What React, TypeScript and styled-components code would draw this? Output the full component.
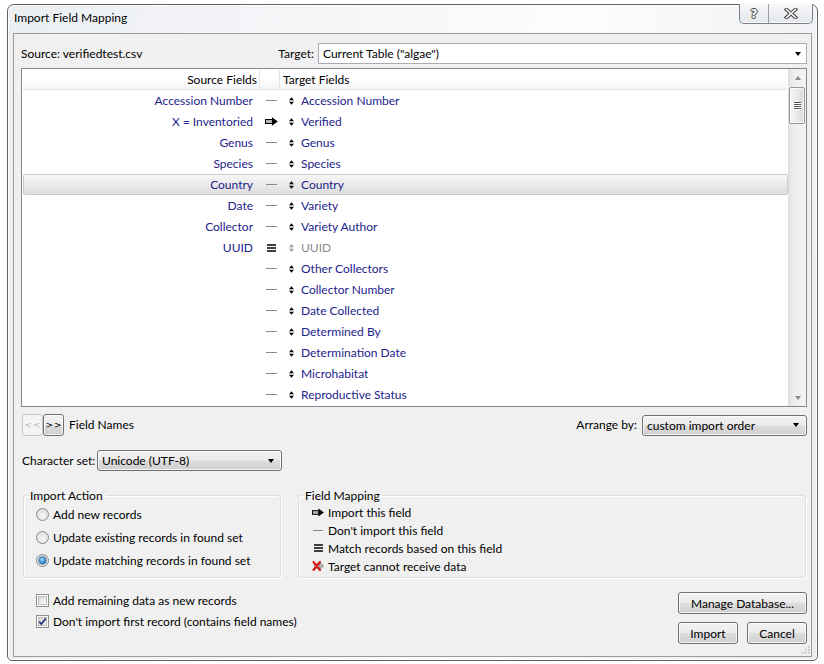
import React from "react";
import styled, { createGlobalStyle, css } from "styled-components";

const FONT = `"Lato", "Noto Sans", "Liberation Sans", sans-serif`;

const Global = createGlobalStyle`
  html, body { margin: 0; padding: 0; background: #ffffff; }
  body { font-family: ${FONT}; font-size: 12px; color: #000; }
  * { box-sizing: border-box; }
`;

const Window = styled.div`
  margin: 4px 0 0 7px;
  width: 811px;
  height: 657px;
  border: 1px solid #5f6368;
  border-radius: 7px 7px 5px 5px;
  background: linear-gradient(100deg, #eceff2 0%, #f6f7f9 40%, #fdfdfe 62%, #e9ecef 100%);
  box-shadow: inset 0 0 0 1px rgba(255, 255, 255, 0.85);
  padding: 0 5px 3px 5px;
  display: flex;
  flex-direction: column;
`;

const TitleBar = styled.div`
  height: 28px;
  display: flex;
  align-items: flex-start;
  padding-left: 1px;
`;

const TitleText = styled.div`
  flex: 1;
  margin-top: 5px;
  line-height: 16px;
  font-size: 12px;
`;

const CaptionGroup = styled.div`
  display: flex;
  margin-top: -1px;
  margin-right: -1px;
  height: 20px;
  border: 1px solid #7b7f85;
  border-top: none;
  border-radius: 0 0 5px 5px;
  overflow: hidden;
  background: linear-gradient(#f7f8fa, #e4e7ea);
  box-shadow: inset 0 -1px 0 rgba(255, 255, 255, 0.9);
`;

const CaptionButton = styled.div<{ $w: number; $sep?: boolean }>`
  width: ${(p) => p.$w}px;
  display: flex;
  align-items: center;
  justify-content: center;
  ${(p) =>
    p.$sep &&
    css`
      border-left: 1px solid #9a9ea4;
    `}
`;

const HelpGlyph = styled.span`
  font-family: "DejaVu Sans", sans-serif;
  font-size: 12px;
  font-weight: bold;
  color: #ffffff;
  line-height: 12px;
  text-shadow: 1px 0 #3c3c3c, -1px 0 #3c3c3c, 0 1px #3c3c3c, 0 -1px #3c3c3c;
`;

const Client = styled.div`
  flex: 1;
  position: relative;
  border: 1px solid #9a9a9a;
  background: #f0f0f0;
  padding: 0 4px 0 7px;
  display: flex;
  flex-direction: column;
`;

const TopRow = styled.div`
  margin-top: 9px;
  height: 21px;
  display: flex;
  align-items: center;
`;

const Label = styled.span<{ $w?: number; $ml?: number }>`
  font-size: 12px;
  line-height: 16px;
  white-space: nowrap;
  ${(p) => p.$w !== undefined && css`width: ${p.$w}px; flex: none;`}
  ${(p) => p.$ml !== undefined && css`margin-left: ${p.$ml}px;`}
`;

const Spacer = styled.div`
  flex: 1;
`;

const Caret = styled.span`
  width: 0;
  height: 0;
  border-left: 3.5px solid transparent;
  border-right: 3.5px solid transparent;
  border-top: 4px solid #000;
  flex: none;
`;

const FlatSelect = styled.div<{ $w: number }>`
  width: ${(p) => p.$w}px;
  height: 21px;
  margin-left: 4px;
  border: 1px solid #abadb3;
  background: #fff;
  display: flex;
  align-items: center;
  padding: 0 5px 0 4px;
  font-size: 12px;
  justify-content: space-between;
`;

const buttonFace = css`
  border: 1px solid #707070;
  border-radius: 3px;
  background: linear-gradient(#f2f2f2 0%, #ebebeb 48%, #dddddd 52%, #cfcfcf 100%);
  box-shadow: inset 0 0 0 1px rgba(255, 255, 255, 0.75);
`;

const ButtonSelect = styled.div<{ $w: number; $ml?: number }>`
  ${buttonFace}
  width: ${(p) => p.$w}px;
  height: 21px;
  margin-left: ${(p) => p.$ml ?? 0}px;
  display: flex;
  align-items: center;
  justify-content: space-between;
  padding: 0 7px 0 4px;
  font-size: 12px;
  flex: none;
`;

const ListBox = styled.div`
  margin-top: 4px;
  height: 339px;
  border: 1px solid #828790;
  background: #fff;
  display: flex;
`;

const ListMain = styled.div`
  flex: 1;
  display: flex;
  flex-direction: column;
  overflow: hidden;
  padding-left: 1px;
`;

const Header = styled.div`
  margin-top: 1px;
  height: 20px;
  flex: none;
  display: grid;
  grid-template-columns: 237px 20px 1fr;
  background: linear-gradient(#ffffff 0%, #ffffff 45%, #f3f4f6 100%);
  border-bottom: 1px solid #e3e4e6;
  margin-right: 1px;
`;

const HeaderCell = styled.div<{ $align?: "left" | "right"; $sep?: boolean }>`
  display: flex;
  align-items: center;
  font-size: 12px;
  color: #000;
  justify-content: ${(p) => (p.$align === "right" ? "flex-end" : "flex-start")};
  padding: ${(p) => (p.$align === "right" ? "0 2px 0 0" : "0 0 0 3px")};
  ${(p) =>
    p.$sep &&
    css`
      border-right: 1px solid #e3e4e6;
    `}
`;

const Row = styled.div<{ $sel?: boolean }>`
  height: 21px;
  flex: none;
  display: grid;
  grid-template-columns: 237px 20px 20px 1fr;
  align-items: center;
  border: 1px solid transparent;
  border-radius: 2px;
  padding-bottom: 1px;
  ${(p) =>
    p.$sel &&
    css`
      border-color: #cacaca;
      background: linear-gradient(#f6f6f6 0%, #e9e9e9 55%, #dedede 100%);
    `}
`;

const SourceCell = styled.div`
  text-align: right;
  padding-right: 8px;
  color: #23238c;
  font-size: 12px;
  white-space: nowrap;
  margin-left: -1px;
`;

const IconCell = styled.div`
  display: flex;
  align-items: center;
  justify-content: center;
  padding-top: 1px;
`;

const TargetCell = styled.div<{ $dim?: boolean }>`
  color: ${(p) => (p.$dim ? "#8a8a8a" : "#23238c")};
  font-size: 12px;
  white-space: nowrap;
`;

const Dash = styled.span<{ $w?: number }>`
  display: block;
  width: ${(p) => p.$w ?? 11}px;
  height: 1px;
  background: #8a8a8a;
`;

const ScrollBar = styled.div`
  width: 18px;
  flex: none;
  display: flex;
  flex-direction: column;
  background: linear-gradient(90deg, #e3e3e3 0%, #efefef 30%, #f2f2f2 100%);
  border-left: 1px solid #dcdcdc;
`;

const ScrollArrow = styled.div<{ $down?: boolean }>`
  height: 17px;
  flex: none;
  display: flex;
  align-items: center;
  justify-content: center;
  &::after {
    content: "";
    width: 0;
    height: 0;
    border-left: 3.5px solid transparent;
    border-right: 3.5px solid transparent;
    ${(p) =>
      p.$down
        ? css`
            border-top: 4px solid #8d8d8d;
          `
        : css`
            border-bottom: 4px solid #8d8d8d;
          `}
  }
`;

const Thumb = styled.div`
  height: 37px;
  margin: 1px 1px 0 0;
  border: 1px solid #979797;
  border-radius: 2px;
  background: linear-gradient(90deg, #f6f6f6 0%, #ececec 45%, #d9d9d9 100%);
  box-shadow: inset 0 0 0 1px rgba(255, 255, 255, 0.8);
  display: flex;
  flex-direction: column;
  align-items: center;
  justify-content: center;
  gap: 1px;
`;

const Grip = styled.span`
  width: 7px;
  height: 1px;
  background: #555;
  box-shadow: 0 1px 0 #fff;
`;

const Track = styled.div`
  flex: 1;
`;

const NavRow = styled.div`
  margin-top: 7px;
  height: 22px;
  display: flex;
  align-items: center;
`;

const NavButton = styled.div<{ $disabled?: boolean; $ml?: number }>`
  width: 21px;
  height: 22px;
  margin-left: ${(p) => p.$ml ?? 0}px;
  display: flex;
  align-items: center;
  justify-content: center;
  font-family: "DejaVu Sans", sans-serif;
  font-size: 9px;
  letter-spacing: 1px;
  padding-left: 1px;
  ${(p) =>
    p.$disabled
      ? css`
          border: 1px solid #c4c6c8;
          border-radius: 3px;
          background: #f4f4f4;
          color: #b8b8b8;
        `
      : css`
          ${buttonFace}
          color: #000;
        `}
`;

const CharsetRow = styled.div`
  margin-top: 14px;
  height: 21px;
  display: flex;
  align-items: center;
`;

const Groups = styled.div`
  margin-top: 17px;
  margin-left: 2px;
  margin-right: 1px;
  height: 90px;
  display: flex;
  gap: 17px;
`;

const Group = styled.fieldset<{ $w?: number }>`
  margin: 0;
  padding: 0;
  height: 90px;
  min-width: 0;
  border: 1px solid #d5dfe5;
  border-radius: 3px;
  box-shadow: inset 1px 1px 0 #fff, 1px 1px 0 #fff;
  ${(p) => (p.$w ? css`width: ${p.$w}px; flex: none;` : css`flex: 1;`)}
`;

const GroupLegend = styled.legend`
  margin-left: 4px;
  padding: 0 3px 0 2px;
  font-size: 12px;
  line-height: 15px;
`;

const GroupBody = styled.div<{ $pl: number; $rowH: number }>`
  padding-left: ${(p) => p.$pl}px;
  display: flex;
  flex-direction: column;
  & > * {
    height: ${(p) => p.$rowH}px;
  }
`;

const OptionRow = styled.div`
  display: flex;
  align-items: center;
  gap: 4px;
  font-size: 12px;
  white-space: nowrap;
`;

const Radio = styled.span<{ $on?: boolean }>`
  width: 13px;
  height: 13px;
  flex: none;
  border-radius: 50%;
  border: 1px solid #8b8b8b;
  background: radial-gradient(circle at 50% 60%, #f7f7f7 0%, #e4e4e4 55%, #cfcfcf 100%);
  display: flex;
  align-items: center;
  justify-content: center;
  ${(p) =>
    p.$on &&
    css`
      &::after {
        content: "";
        width: 7px;
        height: 7px;
        border-radius: 50%;
        background: radial-gradient(circle at 45% 40%, #b9e6ff 0%, #3d93d6 45%, #10497e 100%);
        box-shadow: 0 0 0 0.5px #1c3f66;
      }
    `}
`;

const Check = styled.span`
  width: 13px;
  height: 13px;
  flex: none;
  border: 1px solid #8e8f8f;
  background: #fff;
  padding: 1px;
  display: flex;
`;

const CheckInner = styled.span`
  flex: 1;
  background: linear-gradient(135deg, #d8d8d8 0%, #eeeeee 60%, #fbfbfb 100%);
  border: 1px solid #bcbcbc;
  position: relative;
  display: flex;
  align-items: center;
  justify-content: center;
`;

const LegendItem = styled.div`
  display: flex;
  align-items: center;
  font-size: 12px;
  white-space: nowrap;
`;

const LegendIcon = styled.span`
  width: 12px;
  margin-right: 4px;
  display: flex;
  align-items: center;
  justify-content: center;
  flex: none;
`;

const Bottom = styled.div`
  margin-top: 14px;
  display: flex;
  justify-content: space-between;
`;

const CheckColumn = styled.div`
  margin-left: 15px;
  margin-top: -2px;
  display: flex;
  flex-direction: column;
  & > * {
    height: 21px;
  }
`;

const ButtonColumn = styled.div`
  width: 129px;
  display: flex;
  flex-direction: column;
  gap: 8px;
`;

const ButtonLine = styled.div`
  display: flex;
  justify-content: space-between;
`;

const PushButton = styled.div<{ $w?: number }>`
  ${buttonFace}
  height: 22px;
  width: ${(p) => (p.$w ? `${p.$w}px` : "100%")};
  display: flex;
  align-items: center;
  justify-content: center;
  font-size: 12px;
`;

const ResizeGrip = styled.svg`
  position: absolute;
  right: 1px;
  bottom: 2px;
`;

/* ---------- icons ---------- */

const UpDown = ({ dim }: { dim?: boolean }) => (
  <svg width="5" height="8" viewBox="0 0 5 8">
    <path d="M0 3.3L2.5 0.3L5 3.3Z M0 4.7L2.5 7.7L5 4.7Z" fill={dim ? "#9a9a9a" : "#000"} />
  </svg>
);

const ImportArrow = () => (
  <svg width="13" height="9" viewBox="0 0 13 9">
    <rect x="0.5" y="2.5" width="7" height="4" fill="#b0b0b0" stroke="#000" strokeWidth="1" />
    <path d="M7 0.2L12.8 4.5L7 8.8Z" fill="#000" />
  </svg>
);

const MatchIcon = () => (
  <svg width="9" height="8" viewBox="0 0 9 8">
    <rect x="0" y="0" width="9" height="2" fill="#3d3d3d" />
    <rect x="0" y="3" width="9" height="2" fill="#3d3d3d" />
    <rect x="0" y="6" width="9" height="2" fill="#3d3d3d" />
  </svg>
);

const NoTargetIcon = () => (
  <svg width="12" height="10" viewBox="0 0 12 10">
    <rect x="2.5" y="3" width="5" height="4" fill="#c8c8c8" stroke="#8a8a8a" strokeWidth="1" />
    <path d="M7 0.5L11.6 5L7 9.5Z" fill="#b4b4b4" stroke="#8a8a8a" strokeWidth="0.8" />
    <path d="M1.5 1L8 9 M8 1L1.5 9" stroke="#e01010" strokeWidth="2" strokeLinecap="round" />
  </svg>
);

const CloseGlyph = () => (
  <svg width="14" height="11" viewBox="0 0 14 11">
    <path d="M2.5 1.5L11.5 9.5 M11.5 1.5L2.5 9.5" stroke="#3c3c3c" strokeWidth="3.6" strokeLinecap="square" />
    <path d="M2.5 1.5L11.5 9.5 M11.5 1.5L2.5 9.5" stroke="#ffffff" strokeWidth="1.6" strokeLinecap="square" />
  </svg>
);

const CheckMark = () => (
  <svg width="9" height="9" viewBox="0 0 9 9" style={{ position: "absolute" }}>
    <path d="M1.2 4.6L3.4 7L7.8 1.4" fill="none" stroke="#2c3d7c" strokeWidth="1.8" />
  </svg>
);

/* ---------- data ---------- */

type Map = "none" | "import" | "match";
const rows: { src: string; map: Map; tgt: string; dim?: boolean; sel?: boolean }[] = [
  { src: "Accession Number", map: "none", tgt: "Accession Number" },
  { src: "X = Inventoried", map: "import", tgt: "Verified" },
  { src: "Genus", map: "none", tgt: "Genus" },
  { src: "Species", map: "none", tgt: "Species" },
  { src: "Country", map: "none", tgt: "Country", sel: true },
  { src: "Date", map: "none", tgt: "Variety" },
  { src: "Collector", map: "none", tgt: "Variety Author" },
  { src: "UUID", map: "match", tgt: "UUID", dim: true },
  { src: "", map: "none", tgt: "Other Collectors" },
  { src: "", map: "none", tgt: "Collector Number" },
  { src: "", map: "none", tgt: "Date Collected" },
  { src: "", map: "none", tgt: "Determined By" },
  { src: "", map: "none", tgt: "Determination Date" },
  { src: "", map: "none", tgt: "Microhabitat" },
  { src: "", map: "none", tgt: "Reproductive Status" },
];

const MapIcon = ({ m }: { m: Map }) =>
  m === "import" ? <ImportArrow /> : m === "match" ? <MatchIcon /> : <Dash />;

export default function App() {
  return (
    <>
      <Global />
      <Window>
        <TitleBar>
          <TitleText>Import Field Mapping</TitleText>
          <CaptionGroup>
            <CaptionButton $w={28}>
              <HelpGlyph>?</HelpGlyph>
            </CaptionButton>
            <CaptionButton $w={44} $sep>
              <CloseGlyph />
            </CaptionButton>
          </CaptionGroup>
        </TitleBar>
        <Client>
          <TopRow>
            <Label>Source: verifiedtest.csv</Label>
            <Spacer />
            <Label>Target:</Label>
            <FlatSelect $w={489}>
              <span>Current Table ("algae")</span>
              <Caret />
            </FlatSelect>
          </TopRow>

          <ListBox>
            <ListMain>
              <Header>
                <HeaderCell $align="right" $sep>
                  Source Fields
                </HeaderCell>
                <HeaderCell $sep />
                <HeaderCell>Target Fields</HeaderCell>
              </Header>
              {rows.map((r, i) => (
                <Row key={i} $sel={r.sel}>
                  <SourceCell>{r.src}</SourceCell>
                  <IconCell>
                    <MapIcon m={r.map} />
                  </IconCell>
                  <IconCell>
                    <UpDown dim={r.dim} />
                  </IconCell>
                  <TargetCell $dim={r.dim}>{r.tgt}</TargetCell>
                </Row>
              ))}
            </ListMain>
            <ScrollBar>
              <ScrollArrow />
              <Thumb>
                <Grip />
                <Grip />
                <Grip />
                <Grip />
              </Thumb>
              <Track />
              <ScrollArrow $down />
            </ScrollBar>
          </ListBox>

          <NavRow>
            <NavButton $disabled $ml={1}>
              &lt;&lt;
            </NavButton>
            <NavButton>&gt;&gt;</NavButton>
            <Label $ml={5}>Field Names</Label>
            <Spacer />
            <Label>Arrange by:</Label>
            <ButtonSelect $w={165} $ml={5}>
              <span>custom import order</span>
              <Caret />
            </ButtonSelect>
          </NavRow>

          <CharsetRow>
            <Label $w={75} $ml={1}>
              Character set:
            </Label>
            <ButtonSelect $w={185}>
              <span>Unicode (UTF-8)</span>
              <Caret />
            </ButtonSelect>
          </CharsetRow>

          <Groups>
            <Group $w={258}>
              <GroupLegend>Import Action</GroupLegend>
              <GroupBody $pl={12} $rowH={23}>
                <OptionRow>
                  <Radio />
                  Add new records
                </OptionRow>
                <OptionRow>
                  <Radio />
                  Update existing records in found set
                </OptionRow>
                <OptionRow>
                  <Radio $on />
                  Update matching records in found set
                </OptionRow>
              </GroupBody>
            </Group>
            <Group>
              <GroupLegend>Field Mapping</GroupLegend>
              <GroupBody $pl={13} $rowH={18}>
                <LegendItem>
                  <LegendIcon>
                    <ImportArrow />
                  </LegendIcon>
                  Import this field
                </LegendItem>
                <LegendItem>
                  <LegendIcon>
                    <Dash $w={10} />
                  </LegendIcon>
                  Don't import this field
                </LegendItem>
                <LegendItem>
                  <LegendIcon>
                    <MatchIcon />
                  </LegendIcon>
                  Match records based on this field
                </LegendItem>
                <LegendItem>
                  <LegendIcon>
                    <NoTargetIcon />
                  </LegendIcon>
                  Target cannot receive data
                </LegendItem>
              </GroupBody>
            </Group>
          </Groups>

          <Bottom>
            <CheckColumn>
              <OptionRow>
                <Check>
                  <CheckInner />
                </Check>
                Add remaining data as new records
              </OptionRow>
              <OptionRow>
                <Check>
                  <CheckInner>
                    <CheckMark />
                  </CheckInner>
                </Check>
                Don't import first record (contains field names)
              </OptionRow>
            </CheckColumn>
            <ButtonColumn>
              <PushButton>Manage Database...</PushButton>
              <ButtonLine>
                <PushButton $w={60}>Import</PushButton>
                <PushButton $w={60}>Cancel</PushButton>
              </ButtonLine>
            </ButtonColumn>
          </Bottom>

          <ResizeGrip width="10" height="10" viewBox="0 0 10 10">
            {[
              [8, 2],
              [5, 5],
              [8, 5],
              [2, 8],
              [5, 8],
              [8, 8],
            ].map(([x, y], i) => (
              <rect key={i} x={x} y={y} width="1.5" height="1.5" fill="#b5b5b5" />
            ))}
          </ResizeGrip>
        </Client>
      </Window>
    </>
  );
}
